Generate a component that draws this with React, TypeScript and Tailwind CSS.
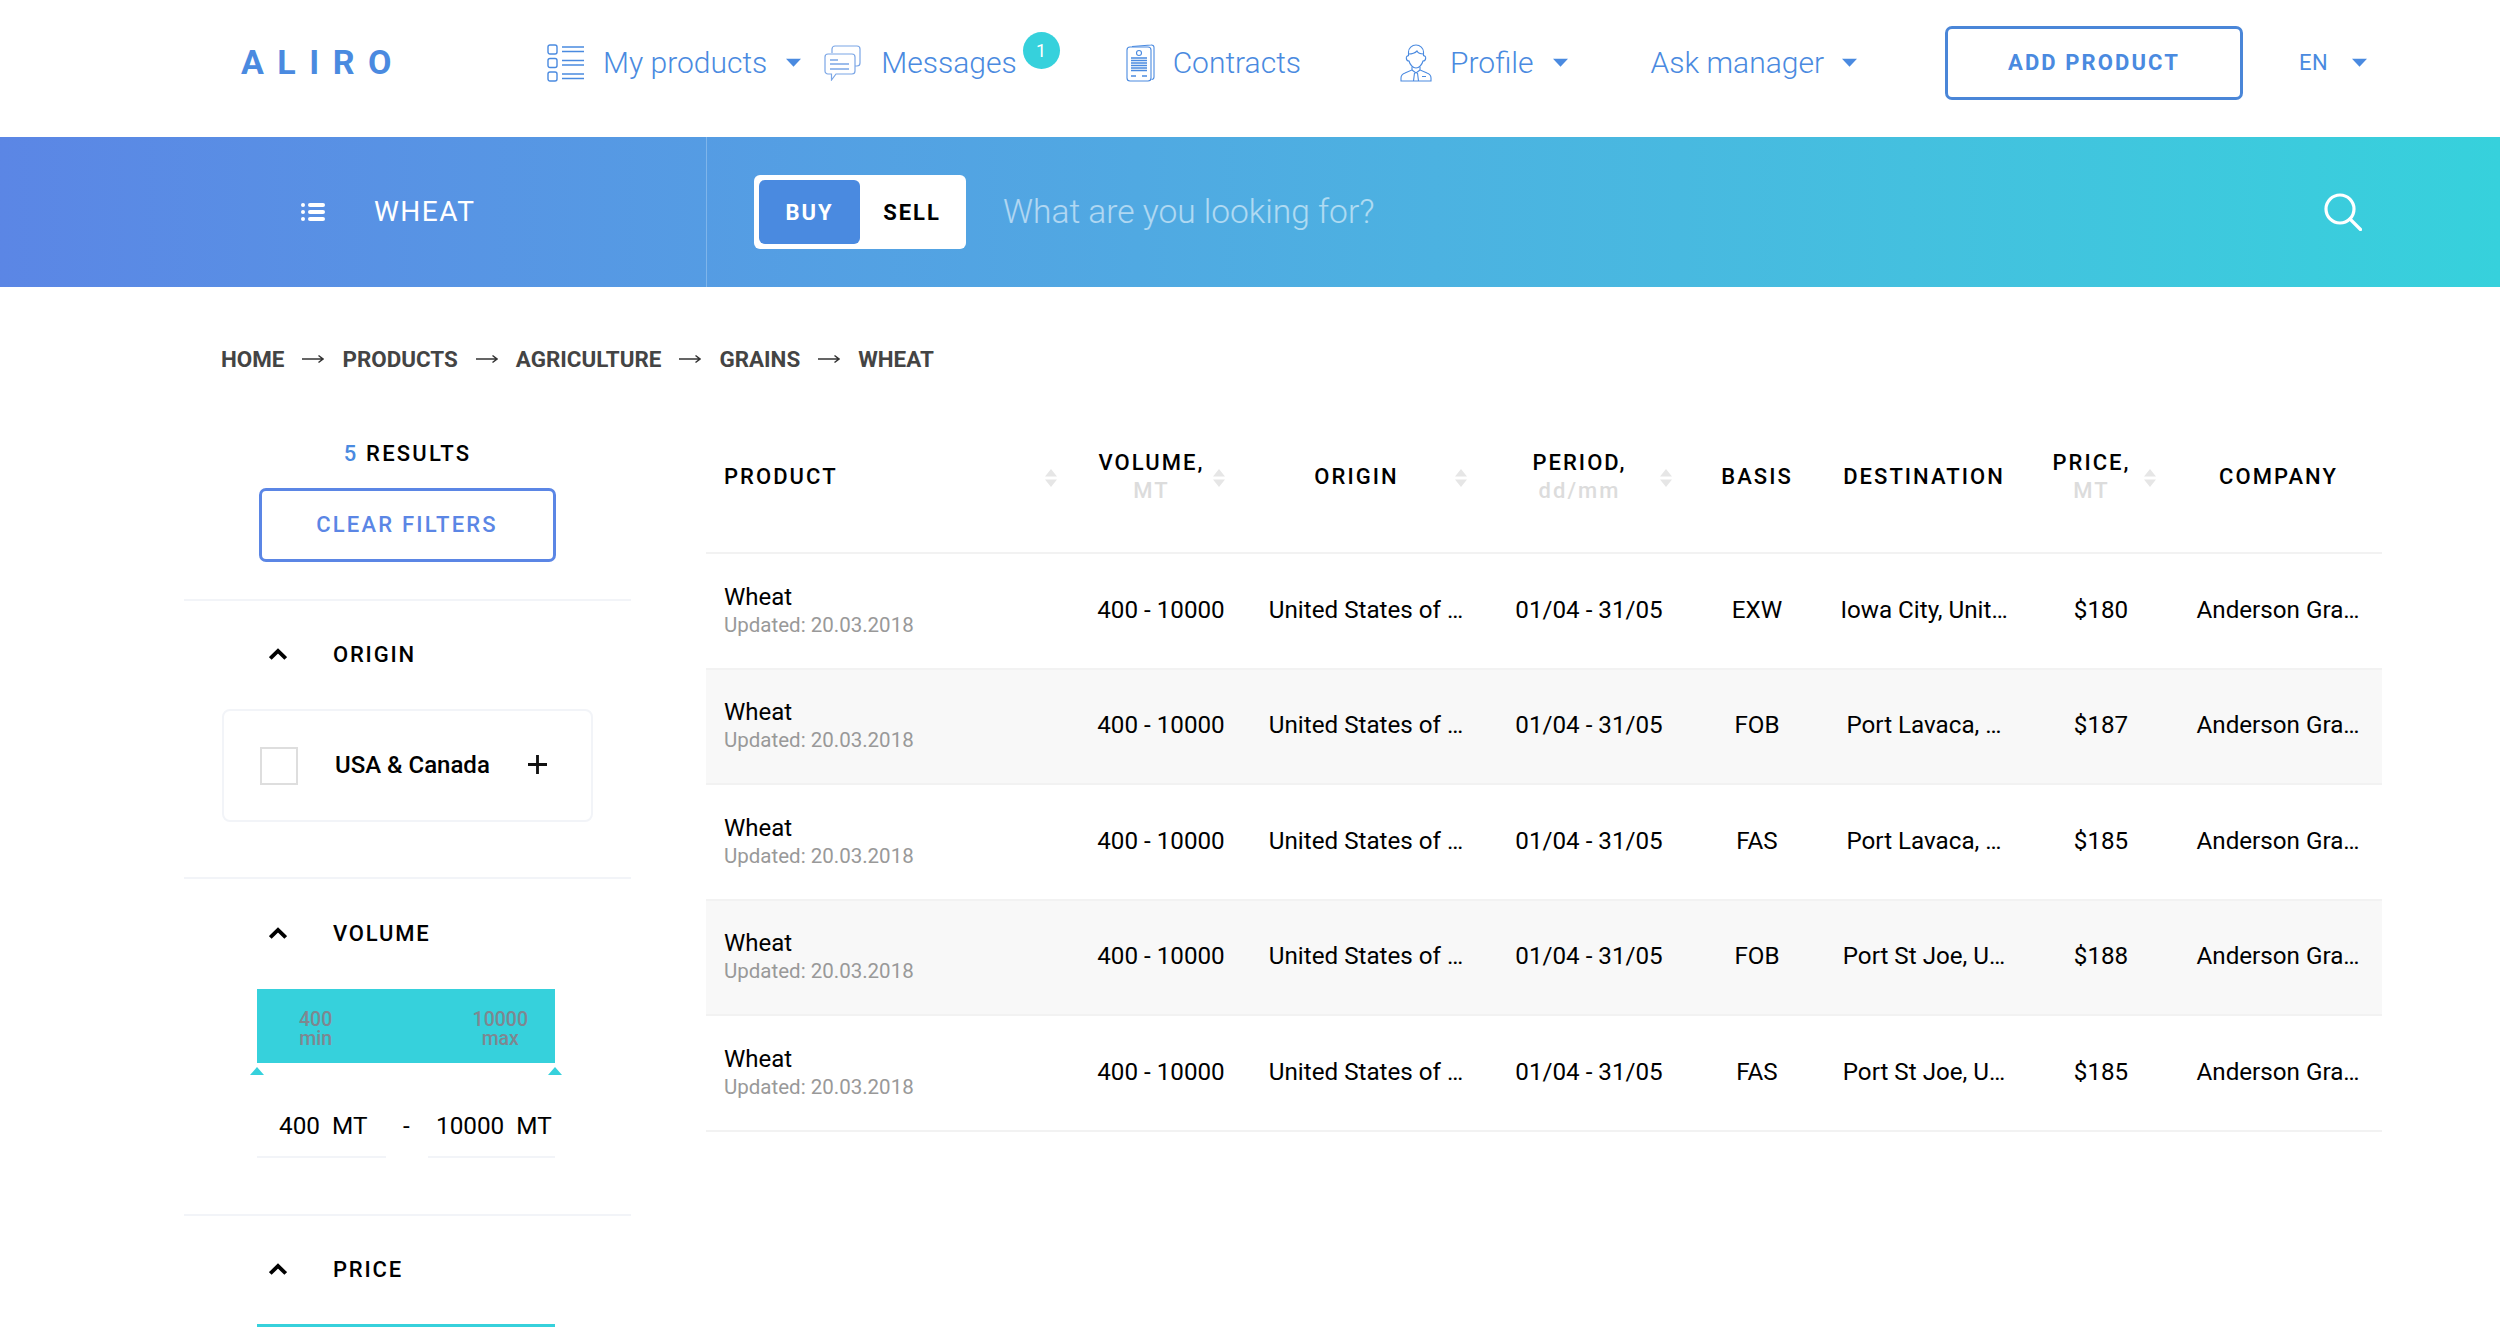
import React from "react";

const Caret = ({ className }: { className: string }) => (
  <svg viewBox="0 0 14 8" className={className} fill="#4a8ae0">
    <path d="M0 0.5h14L7 8z" />
  </svg>
);

const ListIcon = () => (
  <svg viewBox="0 0 37 38" className="w-[37px] h-[38px] shrink-0" fill="none" stroke="#4a8ae0" strokeWidth="1.4">
    <rect x="1" y="1" width="9" height="9" rx="2" />
    <rect x="1" y="14.5" width="9" height="9" rx="2" />
    <rect x="1" y="28" width="9" height="9" rx="2" />
    <path d="M15 3h22M15 7.500h22M15 16.500h22M15 21h22M15 30h22M15 34.500h22" />
  </svg>
);

const ChatIcon = () => (
  <svg viewBox="0 0 37 36" className="w-[37px] h-[36px] shrink-0" fill="none" stroke="#7ba6e6" strokeWidth="1.2">
    <path d="M8 8V4a3 3 0 0 1 3-3h22a3 3 0 0 1 3 3v14a3 3 0 0 1-3 3h-3" />
    <path d="M4 9h24a3 3 0 0 1 3 3v14a3 3 0 0 1-3 3H12l-4.500 6V29H4a3 3 0 0 1-3-3V12a3 3 0 0 1 3-3z" fill="#fff" />
    <path d="M6 15h8M6 19h19M6 24h19" strokeWidth="1.300" />
  </svg>
);

const ContractIcon = () => (
  <svg viewBox="0 0 29 38" className="w-[29px] h-[38px] shrink-0" fill="none" stroke="#4a8ae0" strokeWidth="1.100">
    <path d="M6 2.500 25 1a2.500 2.500 0 0 1 3 2.500V33a2.500 2.500 0 0 1-2.500 2.500" />
    <rect x="1" y="3" width="24" height="34" rx="3" fill="#fff" />
    <circle cx="13" cy="9" r="2.500" />
    <path d="M5 14h16M5 16.500h16M5 19h16M5 21.500h16M5 24h16M5 26.500h16" strokeWidth="1.300" />
    <path d="M5 32h5M16 32h5" strokeWidth="1.500" />
  </svg>
);

const ProfileIcon = () => (
  <svg viewBox="0 0 32 38" className="w-[32px] h-[38px] shrink-0" fill="none" stroke="#4a8ae0" strokeWidth="1.100">
    <path d="M8.500 12V8a7.500 7 0 0 1 15 0v4" />
    <path d="M8.500 10c4 0 6.500-1 8.500-3 1 2 3.500 3 6.500 3" />
    <path d="M8.500 12c-3-1-3 5 0.500 5C10 21 13 24 16 24s6-3 7-7c3.500 0 3.500-6 0.500-5" />
    <path d="M12 23v3l-7 3C2.500 30 1 31.500 1 34v3h30v-3c0-2.500-1.500-4-4-5l-7-3v-3" />
    <path d="M12 26l4 3 4-3M14.500 29l-1 8M17.500 29l1 8M22 32.500h4" />
  </svg>
);

const Chevron = () => (
  <svg viewBox="0 0 18 12" className="w-[18px] h-[12px] shrink-0" fill="none" stroke="#000" strokeWidth="3.800">
    <path d="M1.300 10.500 9 3l7.700 7.500" />
  </svg>
);

const Arrow = () => (
  <svg viewBox="0 0 22 10" className="w-[22px] h-[10px] mx-[18px] shrink-0" fill="none" stroke="#333" strokeWidth="1.500">
    <path d="M0 5h20M16.500 1.500 21 5l-4.500 3.500" />
  </svg>
);

const Sort = ({ className }: { className: string }) => (
  <svg viewBox="0 0 14 18" className={className} fill="#e6e6e6">
    <path d="M7 0l6 7.500H1zM7 18l-6-7.500h12z" />
  </svg>
);

const Tri = () => (
  <svg viewBox="0 0 14 8" className="w-[14px] h-[8px]" fill="#36d1dc">
    <path d="M7 0l7 8H0z" />
  </svg>
);

const rows = [
  ["EXW", "Iowa City, Unit…", "$180"],
  ["FOB", "Port Lavaca, …", "$187"],
  ["FAS", "Port Lavaca, …", "$185"],
  ["FOB", "Port St Joe, U…", "$188"],
  ["FAS", "Port St Joe, U…", "$185"],
];

const grid = "grid grid-cols-[376px_158px_252px_194px_142px_192px_162px_200px]";
const headText = "text-[22px] leading-[28px] font-medium tracking-[2.050px] text-black";
const subHead = "text-[22px] leading-[28px] font-medium tracking-[2.050px] text-[#dcdcdc]";

export default function App() {
  return (
    <div className="h-[1327px] overflow-hidden bg-white font-['Roboto',sans-serif] text-black">
      <header className="h-[137px] pb-[12px] flex items-center pl-[241px] text-[#4a8ae0] text-[30px] font-light">
        <div className="w-[306px] text-[34px] leading-none font-bold tracking-[13.500px] -mt-[1px]">ALIRO</div>
        <ListIcon />
        <span className="ml-[19px]">My products</span>
        <Caret className="w-[15px] h-[9px] ml-[19px]" />
        <div className="ml-[23px]"><ChatIcon /></div>
        <span className="ml-[20px]">Messages</span>
        <span className="ml-[6px] -mt-[24px] w-[37px] h-[37px] rounded-full bg-[#36d1dc] text-white text-[18px] font-normal flex items-center justify-center">1</span>
        <div className="ml-[66px]"><ContractIcon /></div>
        <span className="ml-[18px]">Contracts</span>
        <div className="ml-[99px]"><ProfileIcon /></div>
        <span className="ml-[18px]">Profile</span>
        <Caret className="w-[15px] h-[9px] ml-[19px]" />
        <span className="ml-[83px]">Ask manager</span>
        <Caret className="w-[15px] h-[9px] ml-[18px]" />
        <button className="ml-[88px] w-[298px] h-[74px] rounded-[7px] border-[3px] border-[#4a86d8] text-[22px] font-bold tracking-[2.100px] text-[#4a8ae0]">ADD PRODUCT</button>
        <span className="ml-[56px] text-[22px] font-normal tracking-[0.500px]">EN</span>
        <Caret className="w-[15px] h-[9px] ml-[24px]" />
      </header>

      <div className="h-[150px] flex items-stretch bg-gradient-to-r from-[#5b86e5] to-[#36d1dc] text-white">
        <div className="w-[707px] flex items-center pl-[301px] border-r border-white/25">
          <svg viewBox="0 0 24 20" className="w-[24px] h-[20px]" fill="#fff">
            <rect x="0" y="1" width="4" height="4" rx="2" />
            <rect x="0" y="8" width="4" height="4" rx="2" />
            <rect x="0" y="15" width="4" height="4" rx="2" />
            <rect x="7" y="1" width="17" height="4" rx="2" />
            <rect x="7" y="8" width="17" height="4" rx="2" />
            <rect x="7" y="15" width="17" height="4" rx="2" />
          </svg>
          <span className="ml-[49px] text-[28px] tracking-[1.500px]">WHEAT</span>
        </div>
        <div className="flex-1 flex items-center pl-[47px] pr-[138px]">
          <div className="w-[212px] h-[74px] bg-white rounded-[6px] p-[5px] flex shrink-0">
            <div className="w-[101px] rounded-[6px] bg-[#4a8ae0] flex items-center justify-center text-[22px] font-bold tracking-[2px]">BUY</div>
            <div className="flex-1 pl-[3px] flex items-center justify-center text-[22px] font-bold tracking-[2px] text-black">SELL</div>
          </div>
          <span className="ml-[37px] flex-1 text-[33.500px] font-light text-white/55">What are you looking for?</span>
          <svg viewBox="0 0 38 38" className="w-[38px] h-[38px]" fill="none" stroke="#fff" strokeWidth="3.200" strokeLinecap="round">
            <circle cx="16" cy="16" r="14" />
            <path d="M26 26l10.500 10.500" />
          </svg>
        </div>
      </div>

      <nav className="h-[114px] pl-[221px] pt-[57px] flex items-start text-[22.400px] leading-[30px] font-bold text-[#444]">
        <span>HOME</span>
        <span className="h-[30px] flex items-center"><Arrow /></span>
        <span>PRODUCTS</span>
        <span className="h-[30px] flex items-center"><Arrow /></span>
        <span>AGRICULTURE</span>
        <span className="h-[30px] flex items-center"><Arrow /></span>
        <span>GRAINS</span>
        <span className="h-[30px] flex items-center"><Arrow /></span>
        <span>WHEAT</span>
      </nav>

      <main className="flex pl-[184px]">
        <aside className="w-[447px] shrink-0">
          <div className="h-[200px] border-b-2 border-[#f2f4f8] flex flex-col items-center">
            <div className="mt-[38px] text-[22px] leading-[30px] font-medium tracking-[2.200px]">
              <span className="text-[#4a8ae0]">5</span> RESULTS
            </div>
            <button className="mt-[19px] ml-[-1px] w-[297px] h-[74px] rounded-[7px] border-[3px] border-[#5b86e5] pb-[1px] text-[22px] font-medium tracking-[2.200px] text-[#5b86e5]">CLEAR FILTERS</button>
          </div>

          <div className="h-[278px] border-b-2 border-[#f2f4f8]">
            <div className="h-[108px] pb-[2px] flex items-center pl-[85px]">
              <Chevron />
              <span className="ml-[46px] text-[22px] font-medium tracking-[1.800px]">ORIGIN</span>
            </div>
            <div className="ml-[38px] w-[371px] h-[113px] rounded-[8px] border-2 border-[#f2f4f8] flex items-center pl-[36px]">
              <span className="w-[38px] h-[38px] border-2 border-[#dedede] shrink-0" />
              <span className="ml-[37px] -mt-[2px] text-[24px] font-medium">USA &amp; Canada</span>
              <svg viewBox="0 0 20 20" className="w-[19px] h-[19px] ml-[38px] -mt-[2px]" fill="none" stroke="#111" strokeWidth="3">
                <path d="M10 0v20M0 10h20" />
              </svg>
            </div>
          </div>

          <div className="h-[337px] border-b-2 border-[#f2f4f8]">
            <div className="h-[110px] pb-[2px] flex items-center pl-[85px]">
              <Chevron />
              <span className="ml-[46px] text-[22px] font-medium tracking-[1.800px]">VOLUME</span>
            </div>
            <div className="ml-[73px] w-[298px]">
              <div className="h-[74px] bg-[#36d1dc] flex justify-between pl-[42px] pr-[27px] pt-[21px] text-[19.500px] leading-[19px] font-medium text-[#7e8790] text-center">
                <div>400<br />min</div>
                <div>10000<br />max</div>
              </div>
              <div className="relative h-[13px]">
                <span className="absolute left-[-7px] top-[4px]"><Tri /></span>
                <span className="absolute right-[-7px] top-[4px]"><Tri /></span>
              </div>
              <div className="flex items-start mt-[20px] text-[24.300px] leading-[32px]">
                <div className="w-[129px] h-[62px] border-b-2 border-[#f2f4f8] pt-[14px] pl-[22px] whitespace-pre">400  MT</div>
                <div className="w-[42px] pt-[14px] pl-[17px]">-</div>
                <div className="w-[127px] h-[62px] border-b-2 border-[#f2f4f8] pt-[14px] pl-[8px] whitespace-pre">10000  MT</div>
              </div>
            </div>
          </div>

          <div>
            <div className="h-[108px] pb-[2px] flex items-center pl-[85px]">
              <Chevron />
              <span className="ml-[46px] text-[22px] font-medium tracking-[1.800px]">PRICE</span>
            </div>
            <div className="ml-[73px] w-[298px] h-[74px] bg-[#36d1dc]" />
          </div>
        </aside>

        <section className="ml-[75px] w-[1676px] shrink-0">
          <div className={`${grid} h-[153px] border-b-2 border-[#f2f2f2] items-center text-center ${headText}`}>
            <div className="relative pl-[18px] text-left">
              PRODUCT
              <Sort className="absolute right-[24px] top-[6px] w-[14px] h-[18px]" />
            </div>
            <div className="relative pr-[19px]">
              <div>VOLUME,</div>
              <div className={subHead}>MT</div>
              <Sort className="absolute right-[14px] top-[20px] w-[14px] h-[18px]" />
            </div>
            <div className="relative pr-[19px]">
              ORIGIN
              <Sort className="absolute right-[24px] top-[6px] w-[14px] h-[18px]" />
            </div>
            <div className="relative pr-[19px]">
              <div>PERIOD,</div>
              <div className={subHead}>dd/mm</div>
              <Sort className="absolute right-[13px] top-[20px] w-[14px] h-[18px]" />
            </div>
            <div>BASIS</div>
            <div>DESTINATION</div>
            <div className="relative pr-[19px]">
              <div>PRICE,</div>
              <div className={subHead}>MT</div>
              <Sort className="absolute right-[25px] top-[20px] w-[14px] h-[18px]" />
            </div>
            <div className="pr-[7px]">COMPANY</div>
          </div>
          {rows.map((r, i) => (
            <div
              key={i}
              className={`${grid} h-[115.500px] pb-[2px] border-b-2 border-[#f2f2f2] items-center text-center text-[24.200px] ${i % 2 === 1 ? "bg-[#f8f8f8]" : "bg-white"}`}
            >
              <div className="pl-[18px] text-left">
                <div className="leading-[30px] text-[24px]">Wheat</div>
                <div className="text-[20.500px] leading-[26px] text-[#999]">Updated: 20.03.2018</div>
              </div>
              <div>400 - 10000</div>
              <div>United States of …</div>
              <div>01/04 - 31/05</div>
              <div>{r[0]}</div>
              <div>{r[1]}</div>
              <div>{r[2]}</div>
              <div className="pr-[8px]">Anderson Gra…</div>
            </div>
          ))}
        </section>
      </main>
    </div>
  );
}
